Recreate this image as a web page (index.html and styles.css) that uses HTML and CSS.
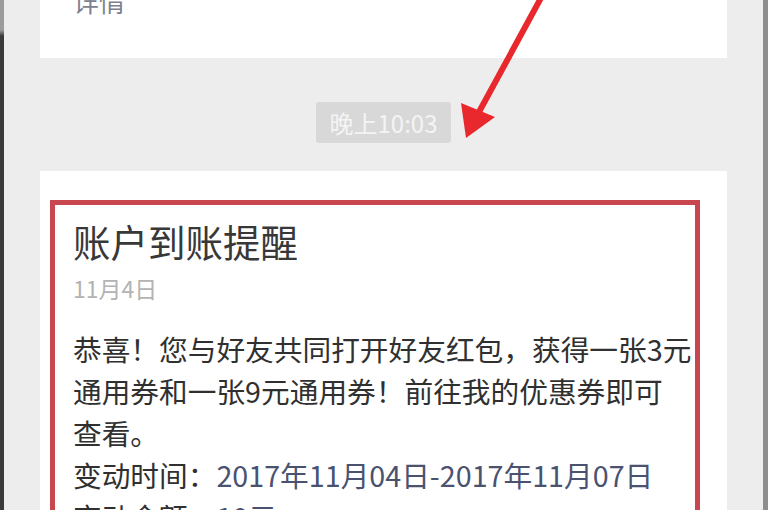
FILE: index.html
```html
<!DOCTYPE html>
<html lang="zh-CN">
<head>
<meta charset="utf-8">
<title>账户到账提醒</title>
<link rel="stylesheet" href="styles.css">
</head>
<body>
<div class="screen">
  <div class="edge-left"></div>
  <div class="chat">
    <div class="card card-top">
      <span class="detail">详情</span>
    </div>
    <div class="time-row"><span class="time">晚上10:03</span></div>
    <div class="card card-main">
      <div class="highlight">
        <div class="title">账户到账提醒</div>
        <div class="date">11月4日</div>
        <div class="body">
          <p class="line">恭喜！您与好友共同打开好友红包，获得一张3元</p>
          <p class="line">通用券和一张9元通用券！前往我的优惠券即可</p>
          <p class="line">查看。</p>
          <p class="line">变动时间：<span class="value">2017年11月04日-2017年11月07日</span></p>
          <p class="line">变动金额：<span class="value">10元</span></p>
        </div>
      </div>
    </div>
  </div>
  <div class="edge-right"></div>
  <svg class="arrow" width="768" height="510" viewBox="0 0 768 510" aria-hidden="true">
    <line x1="542" y1="-4" x2="479" y2="112" stroke="#e8282d" stroke-width="6" stroke-linecap="round"/>
    <polygon points="466,138 461,103 495,117" fill="#e8282d"/>
  </svg>
</div>
</body>
</html>
```

FILE: styles.css
```css
* { box-sizing: border-box; }
html, body { margin: 0; padding: 0; }
body {
  width: 768px;
  height: 510px;
  overflow: hidden;
  background: #ededed;
  font-family: "Noto Sans CJK SC", "Noto Sans", sans-serif;
  color: #353535;
}
.screen {
  position: relative;
  display: flex;
  height: 510px;
  overflow: hidden;
}
.edge-left {
  width: 4px;
  flex: none;
  background: linear-gradient(#9c9c9c 0, #9c9c9c 30px, #3a3a3a 36px, #3a3a3a 100%);
}
.edge-right {
  width: 5px;
  flex: none;
  background: #8e8e8e;
}
.chat {
  flex: 1;
  display: flex;
  flex-direction: column;
  padding: 0 36px;
  min-width: 0;
}
.card { background: #ffffff; }
.card-top {
  margin-top: -24px;
  height: 82px;
  flex: none;
  padding-left: 33px;
}
.detail {
  display: block;
  font-size: 26px;
  line-height: 34px;
  color: #7c818d;
  padding-top: 8px;
}
.time-row {
  display: flex;
  justify-content: center;
  margin: 44px 0 28px;
  flex: none;
}
.time {
  display: block;
  height: 41px;
  line-height: 41px;
  padding: 0 14px;
  background: #d8d8d8;
  color: #f4f4f4;
  font-size: 24px;
  border-radius: 3px;
}
.card-main {
  flex: 1;
  padding: 29px 27px 0 10px;
}
.highlight {
  border: 5px solid #c8474e;
  border-bottom: none;
  height: 100%;
  padding: 14px 0 0 18px;
}
.title {
  font-size: 37.5px;
  line-height: 44px;
  color: #383838;
}
.date {
  margin-top: 10px;
  font-size: 23px;
  line-height: 30px;
  color: #b3b3b3;
}
.body {
  margin-top: 25px;
  font-size: 28.7px;
  line-height: 42px;
  color: #303030;
}
.line { margin: 0; white-space: nowrap; }
.value { color: #4a5270; }
.arrow {
  position: absolute;
  left: 0;
  top: 0;
  pointer-events: none;
}
```
